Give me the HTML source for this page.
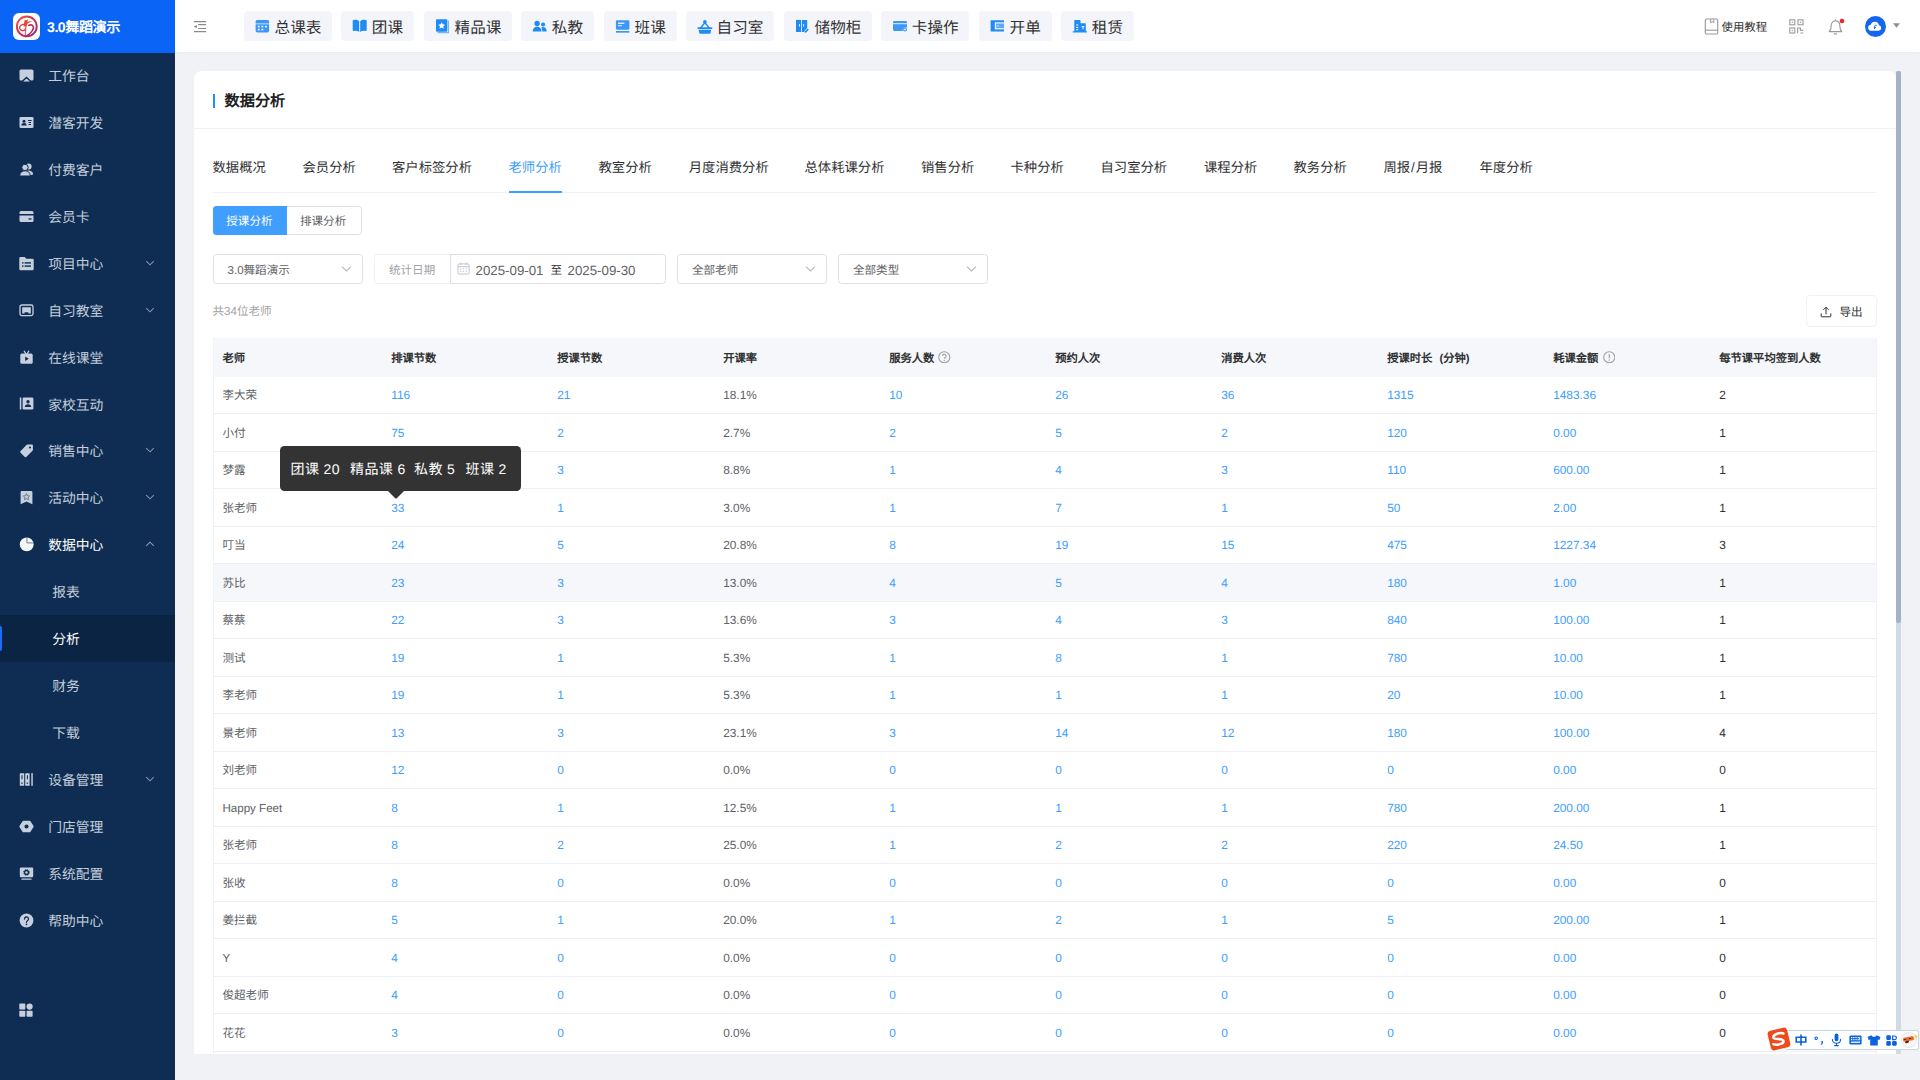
<!DOCTYPE html>
<html lang="zh-CN"><head><meta charset="utf-8"><title>数据分析</title><style>
*{box-sizing:border-box;margin:0;padding:0}
html,body{width:1920px;height:1080px;overflow:hidden;background:#f0f2f6;font-family:"Liberation Sans",sans-serif;text-rendering:geometricPrecision;}
.abs{position:absolute}
.t{position:absolute;white-space:nowrap;line-height:1}
#side{position:absolute;left:0;top:0;width:175px;height:1080px;background:#0f2d52}
#logo{position:absolute;left:0;top:0;width:175px;height:52.5px;background:#0a64f5}
#top{position:absolute;left:175px;top:0;width:1745px;height:52px;background:#fff;box-shadow:0 1px 3px rgba(0,21,41,.04)}
.mi{position:absolute;left:0;width:175px;height:46.92px}
.mi .tx{position:absolute;left:48.2px;top:2.1px;height:46.92px;line-height:46.92px;font-size:13.8px;color:#c3cddb;white-space:nowrap}
.mi.sub .tx{left:52.2px}
.mi svg.ic{position:absolute;left:18.5px;top:16px;width:15px;height:15px}
.mi svg.ch{position:absolute;left:145px;top:19px;width:10px;height:8px}
.nb{position:absolute;top:11px;height:30px;background:#f3f5fb;border-radius:4px}
.nb svg{position:absolute;left:11px;top:7px;width:16px;height:16px}
.nb span{position:absolute;left:30.6px;top:0;line-height:35.4px;font-size:15.6px;color:#333;white-space:nowrap}
#card{position:absolute;left:193.5px;top:71px;width:1702.5px;height:982.5px;background:#fff;border-radius:8px 8px 0 0;overflow:hidden}
.tab{position:absolute;top:159px;font-size:13.33px;color:#303133;white-space:nowrap;line-height:17px}
.hc{position:absolute;top:338px;height:38.75px;line-height:42.6px;font-size:11.3px;font-weight:bold;color:#303133;white-space:nowrap}
.c{position:absolute;font-size:11.85px;white-space:nowrap;line-height:39px;height:37.5px;color:#409eff}
.c.n{color:#606266}
.c.z{font-size:11.55px;line-height:40px}
.c.k{color:#303133}
.rl{position:absolute;left:213px;width:1663px;height:1px;background:#eceff5}
</style></head><body>
<div id="side"><div id="logo"><div class="abs" style="left:13.300px;top:13.300px;width:26.600px;height:26.600px;background:#fff;border-radius:6px"></div><svg class="abs" style="left:13.300px;top:13.300px;width:26.600px;height:26.600px" viewBox="0 0 26.6 26.6"><defs><linearGradient id="lg" gradientUnits="userSpaceOnUse" x1="4" y1="4" x2="22" y2="23"><stop offset="0" stop-color="#ec5a2e"/><stop offset=".45" stop-color="#d42f4b"/><stop offset="1" stop-color="#97286f"/></linearGradient></defs><circle cx="13.800" cy="13.400" r="9.900" fill="none" stroke="url(#lg)" stroke-width="1.900"/><path d="M15.800 12.300C18.800 11 21.200 12.700 20.200 15.700 19.200 18.900 16 21.700 12.500 23.600" fill="none" stroke="url(#lg)" stroke-width="1.700" stroke-linecap="round"/><path d="M13 12.600C12.600 16 12.400 19.500 12.400 22.900" fill="none" stroke="#d6587c" stroke-width="1.200"/><path d="M13 12C11.500 11.200 9.500 11.300 8 12.300 5.900 13.800 6.300 16.500 8.600 17.400 9.900 17.900 11.300 17.400 12.100 16.300" fill="none" stroke="#d93848" stroke-width="1.300" stroke-linecap="round"/><path d="M11.800 6.700L13.200 7.300 15.400 6.200 14 8.700 19.300 7.900 14.600 10.400 13.400 13.300 10.600 13.400 11 10.200z" fill="#e8452f"/><path d="M17.500 20.800C19.500 19.500 21 17.900 22 16" fill="none" stroke="#fff" stroke-width=".5" stroke-opacity=".7"/></svg><div class="t" style="left:47px;top:19.500px;font-size:14.100px;font-weight:bold;color:#fff;letter-spacing:-.45px">3.0舞蹈演示</div></div><div class="mi" style="top:52.000px;"><svg class="ic" viewBox="0 0 15 15"><path fill="#c6cfdd" d="M2 1.5h11a1.5 1.5 0 0 1 1.5 1.5v8a1.5 1.5 0 0 1-1.5 1.5h-1.2L7.5 8.6 3.2 12.5H2A1.5 1.5 0 0 1 .5 11V3A1.5 1.5 0 0 1 2 1.5z"/><path fill="#c6cfdd" d="M7.5 10.6l3.4 3H4.1z"/></svg><span class="tx" style="color:#c3cddb">工作台</span></div><div class="mi" style="top:98.920px;"><svg class="ic" viewBox="0 0 15 15"><rect fill="#c6cfdd" x=".5" y="2" width="14" height="11" rx="1.3"/><circle fill="#0f2d52" cx="5" cy="6.3" r="1.5"/><path fill="#0f2d52" d="M2.3 10.6c0-1.8 1.2-2.6 2.7-2.6s2.7.8 2.7 2.6z"/><rect fill="#0f2d52" x="9" y="5" width="3.6" height="1"/><rect fill="#0f2d52" x="9.6" y="7" width="2.4" height="1"/><rect fill="#0f2d52" x="9.6" y="9" width="2.4" height="1"/></svg><span class="tx" style="color:#c3cddb">潜客开发</span></div><div class="mi" style="top:145.840px;"><svg class="ic" viewBox="0 0 15 15"><circle fill="#c6cfdd" cx="9.6" cy="4.6" r="3"/><path fill="#c6cfdd" d="M5.5 13c0-3 1.8-4.6 4.1-4.6s4.4 1.4 4.4 3.4c0 .8-.5 1.2-1.2 1.2z"/><circle fill="#c6cfdd" cx="6" cy="5.4" r="3.2" stroke="#0f2d52" stroke-width="1"/><path fill="#c6cfdd" stroke="#0f2d52" stroke-width="1" d="M.8 13.6c0-3.2 2.2-4.8 5.2-4.8s5.2 1.6 5.2 4.8c0 .3-.2.4-.5.4H1.3c-.3 0-.5-.1-.5-.4z"/></svg><span class="tx" style="color:#c3cddb">付费客户</span></div><div class="mi" style="top:192.760px;"><svg class="ic" viewBox="0 0 15 15"><path fill="#c6cfdd" d="M2 2h11a1.5 1.5 0 0 1 1.5 1.5V5H.5V3.500A1.5 1.5 0 0 1 2 2zM.5 6.600h14V11.500A1.5 1.500 0 0 1 13 13H2A1.5 1.500 0 0 1 .5 11.500z"/><rect fill="#0f2d52" x="9.5" y="9.300" width="3" height="1.300"/></svg><span class="tx" style="color:#c3cddb">会员卡</span></div><div class="mi" style="top:239.680px;"><svg class="ic" viewBox="0 0 15 15"><path fill="#c6cfdd" d="M1.5 1h4.2l1.6 1.800H13.500A1.200 1.200 0 0 1 14.700 4V13a1.200 1.200 0 0 1-1.200 1.200H1.500A1.200 1.200 0 0 1 .3 13V2.200A1.200 1.200 0 0 1 1.500 1z"/><rect fill="#0f2d52" x="3" y="6.200" width="1.500" height="1.400"/><rect fill="#0f2d52" x="5.600" y="6.200" width="6.400" height="1.400"/><rect fill="#0f2d52" x="3" y="9.400" width="1.500" height="1.400"/><rect fill="#0f2d52" x="5.600" y="9.400" width="6.400" height="1.400"/></svg><span class="tx" style="color:#c3cddb">项目中心</span><svg class="ch" viewBox="0 0 10 8"><path d="M1.200 2.200L5 5.800 8.800 2.200" fill="none" stroke="#8493a8" stroke-width="1.100"/></svg></div><div class="mi" style="top:286.600px;"><svg class="ic" viewBox="0 0 15 15"><rect x="1" y="2" width="13" height="10.600" rx="1.800" fill="none" stroke="#c6cfdd" stroke-width="1.300"/><path fill="#c6cfdd" d="M3.200 4.300h8.600v6.200H9.400V9.300H5.600v1.200H3.200z"/></svg><span class="tx" style="color:#c3cddb">自习教室</span><svg class="ch" viewBox="0 0 10 8"><path d="M1.200 2.200L5 5.800 8.800 2.200" fill="none" stroke="#8493a8" stroke-width="1.100"/></svg></div><div class="mi" style="top:333.520px;"><svg class="ic" viewBox="0 0 15 15"><path d="M5.200 1.200L6.800 3.600M9.800 1.200L8.200 3.600" stroke="#c6cfdd" stroke-width="1.200" stroke-linecap="round"/><rect fill="#c6cfdd" x="1.300" y="3.600" width="12.400" height="10.200" rx="1.600"/><path fill="#0f2d52" d="M6.200 6.400l3.600 2.300-3.600 2.300z"/></svg><span class="tx" style="color:#c3cddb">在线课堂</span></div><div class="mi" style="top:380.440px;"><svg class="ic" viewBox="0 0 15 15"><rect fill="#c6cfdd" x=".8" y="1.500" width="1.500" height="12"/><rect fill="#c6cfdd" x="3.600" y="1.500" width="10.800" height="12" rx="1.300"/><circle fill="#0f2d52" cx="9" cy="5.800" r="1.700"/><path fill="#0f2d52" d="M5.800 11c0-2 1.400-2.800 3.200-2.800s3.200.8 3.200 2.800z"/></svg><span class="tx" style="color:#c3cddb">家校互动</span></div><div class="mi" style="top:427.360px;"><svg class="ic" viewBox="0 0 15 15"><path fill="#c6cfdd" d="M8.600 1.500H13a.9.9 0 0 1 .9.900v4.400a1.200 1.200 0 0 1-.35.850L7.200 14a1 1 0 0 1-1.400 0L1.400 9.600a1 1 0 0 1 0-1.400L7.750 1.850A1.200 1.200 0 0 1 8.600 1.500z"/><circle fill="#0f2d52" cx="10.900" cy="4.500" r="1.100"/></svg><span class="tx" style="color:#c3cddb">销售中心</span><svg class="ch" viewBox="0 0 10 8"><path d="M1.200 2.200L5 5.800 8.800 2.200" fill="none" stroke="#8493a8" stroke-width="1.100"/></svg></div><div class="mi" style="top:474.280px;"><svg class="ic" viewBox="0 0 15 15"><path fill="#c6cfdd" d="M2.800 1h9.400a1.200 1.200 0 0 1 1.200 1.200V14.200L7.500 11.600 1.600 14.200V2.200A1.200 1.200 0 0 1 2.800 1z"/><path d="M7.500 3.700l1 2 2.100.3-1.550 1.500.4 2.200-1.950-1.050-1.950 1.050.4-2.200L4.400 6l2.100-.3z" fill="none" stroke="#4f6280" stroke-width=".8"/></svg><span class="tx" style="color:#c3cddb">活动中心</span><svg class="ch" viewBox="0 0 10 8"><path d="M1.200 2.200L5 5.800 8.800 2.200" fill="none" stroke="#8493a8" stroke-width="1.100"/></svg></div><div class="mi" style="top:521.200px;"><svg class="ic" viewBox="0 0 15 15"><circle fill="#f4f6fa" cx="7.700" cy="7.400" r="6.950"/><path d="M7.900 .2V5.900H14.800" fill="none" stroke="#4f6280" stroke-width=".8"/></svg><span class="tx" style="color:#ffffff">数据中心</span><svg class="ch" viewBox="0 0 10 8"><path d="M1.200 5.800L5 2.200 8.800 5.800" fill="none" stroke="#8f9cb1" stroke-width="1.100"/></svg></div><div class="mi sub" style="top:568.120px;"><span class="tx" style="color:#c3cddb">报表</span></div><div class="mi sub" style="top:615.040px;background:#0c2443;"><div class="abs" style="left:0;top:10.500px;width:2.200px;height:25.500px;background:#1a6dff;border-radius:0 2px 2px 0"></div><span class="tx" style="color:#ffffff">分析</span></div><div class="mi sub" style="top:661.960px;"><span class="tx" style="color:#c3cddb">财务</span></div><div class="mi sub" style="top:708.880px;"><span class="tx" style="color:#c3cddb">下载</span></div><div class="mi" style="top:755.800px;"><svg class="ic" viewBox="0 0 15 15"><rect fill="#c6cfdd" x=".8" y="1.200" width="4.400" height="12.600" rx=".6"/><rect fill="#c6cfdd" x="6.200" y="1.200" width="4.400" height="12.600" rx=".6"/><rect fill="#c6cfdd" x="12.300" y="1.200" width="1.500" height="12.600"/><rect fill="#0f2d52" x="2.500" y="3.200" width="1" height="4"/><rect fill="#0f2d52" x="7.900" y="3.200" width="1" height="4"/><rect fill="#0f2d52" x="2.300" y="10.600" width="1.400" height="1.200"/><rect fill="#0f2d52" x="7.700" y="10.600" width="1.400" height="1.200"/></svg><span class="tx" style="color:#c3cddb">设备管理</span><svg class="ch" viewBox="0 0 10 8"><path d="M1.200 2.200L5 5.800 8.800 2.200" fill="none" stroke="#8493a8" stroke-width="1.100"/></svg></div><div class="mi" style="top:802.720px;"><svg class="ic" viewBox="0 0 15 15"><path fill="#c6cfdd" d="M4.600 1.700h5.800a1.300 1.300 0 0 1 1.100.65l2.900 4.500a1.300 1.300 0 0 1 0 1.300l-2.900 4.500a1.300 1.300 0 0 1-1.100.65H4.600a1.300 1.300 0 0 1-1.100-.65L.6 8.150a1.300 1.300 0 0 1 0-1.300l2.900-4.500a1.300 1.300 0 0 1 1.100-.65z"/><circle fill="#0f2d52" cx="7.500" cy="7.500" r="2"/></svg><span class="tx" style="color:#c3cddb">门店管理</span></div><div class="mi" style="top:849.640px;"><svg class="ic" viewBox="0 0 15 15"><rect fill="#c6cfdd" x=".8" y="1.600" width="13.400" height="9.600" rx="1.200"/><rect fill="#c6cfdd" x="2.400" y="12.400" width="10.200" height="1.400" rx=".5"/><circle cx="7.500" cy="6.400" r="1.900" fill="none" stroke="#0f2d52" stroke-width="1.300"/><circle cx="7.500" cy="6.400" r="2.900" fill="none" stroke="#0f2d52" stroke-width="1" stroke-dasharray="1.100 1.180"/></svg><span class="tx" style="color:#c3cddb">系统配置</span></div><div class="mi" style="top:896.560px;"><svg class="ic" viewBox="0 0 15 15"><circle fill="#c6cfdd" cx="7.500" cy="7.500" r="6.900"/><path d="M5.500 6a2 2 0 1 1 3 1.700c-.7.450-1 .800-1 1.600" fill="none" stroke="#0f2d52" stroke-width="1.300" stroke-linecap="round"/><circle fill="#0f2d52" cx="7.500" cy="11.300" r=".85"/></svg><span class="tx" style="color:#c3cddb">帮助中心</span></div><svg class="abs" style="left:19px;top:1002.500px;width:14px;height:14px" viewBox="0 0 14 14"><rect fill="#c6cfdd" x=".3" y=".6" width="6" height="6" rx=".8"/><circle fill="#c6cfdd" cx="10.600" cy="3.600" r="3.100"/><rect fill="#c6cfdd" x=".3" y="7.700" width="6" height="6" rx=".8"/><rect fill="#c6cfdd" x="7.600" y="7.700" width="6" height="6" rx=".8"/></svg></div>
<div id="top"></div><svg class="abs" style="left:193px;top:21px;width:14px;height:12px" viewBox="0 0 14 12"><path d="M.9 .65h12.200M5.100 3.700h8M5.100 7.500h8M.9 10.550h12.200" stroke="#8a8a8a" stroke-width="1.200" fill="none"/><path d="M3.800 3.900v3.300L.8 5.550z" fill="#8a8a8a"/></svg><div class="nb" style="left:244.0px;width:88.0px"><svg viewBox="0 0 16 16"><path fill="#3d97f8" d="M2.200 1.900h10.300a1.600 1.600 0 0 1 1.600 1.600v1.900H.6V3.500a1.600 1.600 0 0 1 1.600-1.600z"/><path fill="#3d97f8" d="M.6 6.300h13.500v6.500a1.600 1.600 0 0 1-1.600 1.600H2.200A1.600 1.600 0 0 1 .6 12.800z"/><g fill="#f3f5fb"><rect x="2.800" y="7.800" width="1.900" height="1.600"/><rect x="6.400" y="7.800" width="1.900" height="1.600"/><rect x="10" y="7.800" width="1.900" height="1.600"/><rect x="2.800" y="10.800" width="1.900" height="1.600"/><rect x="6.400" y="10.800" width="1.900" height="1.600"/></g></svg><span>总课表</span></div><div class="nb" style="left:341.2px;width:73.3px"><svg viewBox="0 0 16 16"><path fill="#1f8bf3" d="M.7 3.100C.7 2.400 1 2.100 1.600 2 3.800 1.600 5.800 2.100 7.200 3.300V14C5.800 12.900 3.900 12.500 1.800 12.900 1.100 13 .7 12.700.7 12z"/><path fill="#1f8bf3" d="M14.700 3.100c0-.7-.3-1-.9-1.100C11.600 1.600 9.600 2.100 8.200 3.300V14c1.400-1.100 3.300-1.500 5.400-1.100.7.100 1.100-.2 1.100-.9z"/></svg><span>团课</span></div><div class="nb" style="left:424.0px;width:88.0px"><svg viewBox="0 0 16 16"><path d="M13.400 2.600V14.600H2.600" fill="none" stroke="#1f8bf3" stroke-opacity=".6" stroke-width="1.200"/><rect fill="#1f8bf3" x="1" y="1.250" width="11.300" height="12.400" rx="1"/><path fill="#fff" d="M6.650 4.200l1.060 2.150 2.370.34-1.720 1.670.41 2.360-2.120-1.110-2.120 1.110.41-2.360L3.220 6.690l2.370-.34z"/></svg><span>精品课</span></div><div class="nb" style="left:521.2px;width:73.3px"><svg viewBox="0 0 16 16"><circle fill="#1f8bf3" cx="5.100" cy="5.500" r="2.650"/><path fill="#1f8bf3" d="M.7 13.500c0-3.100 1.800-4.700 4.400-4.700s4.400 1.600 4.400 4.700z"/><circle fill="#1f8bf3" cx="11.100" cy="6.500" r="2.050"/><path fill="#1f8bf3" d="M10.300 13.500c0-1.700-.4-3-1.200-3.900.6-.4 1.200-.6 2-.6 2.100 0 3.600 1.500 3.600 4.500z"/></svg><span>私教</span></div><div class="nb" style="left:604.0px;width:73.3px"><svg viewBox="0 0 16 16"><rect fill="#3d97f8" x=".9" y="2.250" width="13.500" height="9.400" rx="1.300"/><rect fill="#e8f1fd" x="3" y="4.600" width="6.400" height="1.300"/><rect fill="#e8f1fd" fill-opacity=".8" x="3" y="7" width="4" height="1.300"/><rect fill="#3d97f8" x=".9" y="13" width="13.500" height="1.700"/></svg><span>班课</span></div><div class="nb" style="left:686.0px;width:88.0px"><svg viewBox="0 0 16 16"><circle fill="#1f8bf3" cx="7.900" cy="3.800" r="1.900"/><path d="M7.900 4.800l4.600 5.400M7.900 4.800L3.300 10.200" fill="none" stroke="#1f8bf3" stroke-width="1.400"/><rect fill="#1f8bf3" x=".5" y="9.300" width="14.800" height="1.700" rx=".5"/><path fill="#1f8bf3" d="M1.700 11.700h12.400l-.5 3.100a1 1 0 0 1-1 .85H3.200a1 1 0 0 1-1-.85z"/></svg><span>自习室</span></div><div class="nb" style="left:784.0px;width:88.0px"><svg viewBox="0 0 16 16"><rect fill="#1f8bf3" x="1" y="1.900" width="5.200" height="12.100"/><path fill="#1f8bf3" d="M7 1.900h5.200v8.200l-2.600 2.700-.4 1.200H7z"/><rect fill="#f3f5fb" x="4.100" y="6" width=".9" height="2.600"/><rect fill="#f3f5fb" x="8.200" y="6" width=".9" height="2.600"/><path fill="#1f8bf3" d="M12.700 10.600l1.100 1.100-2.600 2.700-1.500.4.400-1.500z"/></svg><span>储物柜</span></div><div class="nb" style="left:881.2px;width:88.0px"><svg viewBox="0 0 16 16"><path fill="#3d97f8" d="M2.400 2.900h11.200A1.400 1.400 0 0 1 15 4.300v5.300a2.900 2.900 0 0 0-4.200 3.400H2.400A1.400 1.400 0 0 1 1 11.600V4.300a1.400 1.400 0 0 1 1.400-1.400z"/><rect fill="#e8f1fd" x="1" y="5.200" width="14" height="1"/><circle cx="13" cy="11.400" r="1.500" fill="none" stroke="#3d97f8" stroke-width="1.100"/></svg><span>卡操作</span></div><div class="nb" style="left:979.0px;width:73.3px"><svg viewBox="0 0 16 16"><rect fill="#1f8bf3" x=".6" y="2.250" width="13.400" height="11.250"/><rect fill="#f3f5fb" x="4.800" y="4.300" width="9.200" height="7.100"/><rect fill="#5ea9f8" x="6.100" y="5.500" width="7.900" height="4.700"/><rect fill="#f3f5fb" x="7.300" y="7.300" width="1.300" height="1.100"/></svg><span>开单</span></div><div class="nb" style="left:1061.2px;width:73.3px"><svg viewBox="0 0 16 16"><path fill="#1f8bf3" d="M2.300 2.500a.6.600 0 0 1 .6-.6h5a.6.600 0 0 1 .6.600v2.800h4.700a.6.600 0 0 1 .6.600v7.400h1.200v1.300H.75v-1.300h1.550z"/><rect fill="#f3f5fb" x="4.200" y="6.400" width="2" height="1.100"/><rect fill="#f3f5fb" x="4.200" y="8.800" width="2" height="1.100"/><rect fill="#f3f5fb" x="4.200" y="11.200" width="2" height="1.100"/><path fill="#f3f5fb" d="M9.700 8h2.600v.9l-.8.400v2h-1v-2l-.8-.4z"/></svg><span>租赁</span></div><svg class="abs" style="left:1704px;top:17.500px;width:15px;height:17px" viewBox="0 0 15 17"><path d="M2.600 1h9.800a1.300 1.300 0 0 1 1.300 1.300V14.700A1.300 1.300 0 0 1 12.400 16H2.600A1.300 1.300 0 0 1 1.300 14.700V2.300A1.300 1.300 0 0 1 2.600 1z" fill="none" stroke="#9a9a9a" stroke-width="1.150"/><path d="M1.300 12.200h12.400" stroke="#9a9a9a" stroke-width="1.150"/><path d="M6.600 1.200v3.600l1.600-1.100 1.600 1.100V1.200" fill="none" stroke="#9a9a9a" stroke-width="1"/></svg><div class="t" style="left:1721.500px;top:20.500px;font-size:11.400px;color:#333;top:23.200px">使用教程</div><svg class="abs" style="left:1789px;top:19px;width:15px;height:15px" viewBox="0 0 15 15"><g fill="none" stroke="#9a9a9a" stroke-width="1.100"><rect x=".8" y=".8" width="5" height="5"/><rect x="9" y=".8" width="5" height="5"/><rect x=".8" y="9" width="5" height="5"/><path d="M8.600 14.200V9h2.800v2.400h2.800M11.400 14h2.800"/></g><g fill="#9a9a9a"><rect x="2.700" y="2.700" width="1.200" height="1.200"/><rect x="10.900" y="2.700" width="1.200" height="1.200"/><rect x="2.700" y="10.900" width="1.200" height="1.200"/></g></svg><svg class="abs" style="left:1827px;top:18px;width:18px;height:18px" viewBox="0 0 18 18"><path d="M2.200 13.600c1.500-1.200 1.900-2.600 1.900-5.400 0-3.200 1.800-5.400 4.400-5.400s4.400 2.200 4.400 5.400c0 2.800.4 4.200 1.900 5.400z" fill="none" stroke="#9a9a9a" stroke-width="1.150" stroke-linejoin="round"/><path d="M7.400 15.800h2.200" stroke="#9a9a9a" stroke-width="1.200" stroke-linecap="round"/><path d="M8.500 1.400v1.200" stroke="#9a9a9a" stroke-width="1.150"/><circle cx="15" cy="3" r="2.300" fill="#f5222d"/></svg><div class="abs" style="left:1864.500px;top:15.500px;width:21.500px;height:21.500px;border-radius:50%;background:#1465f0"></div><svg class="abs" style="left:1867px;top:20px;width:16px;height:12px" viewBox="0 0 16 12"><path fill="#fff" d="M4.200 10.800a3.100 3.100 0 0 1-.5-6.150A4.300 4.300 0 0 1 12 5.200a2.850 2.850 0 0 1-.3 5.600z"/><path d="M7.400 9.200V6.800c0-1 .6-1.500 1.500-1.500h.9M7.400 7.600h1.600" fill="none" stroke="#1465f0" stroke-width="1"/></svg><svg class="abs" style="left:1892.500px;top:22.500px;width:7px;height:5px" viewBox="0 0 7 5"><path d="M0 .2h7L3.500 4.800z" fill="#8e8e8e"/></svg>
<div id="card"></div><div class="abs" style="left:1896px;top:71px;width:5px;height:982.500px;background:#d2dae6"></div><div class="abs" style="left:1896px;top:71px;width:5px;height:552px;background:#a4b1c6;border-radius:2.500px"></div><div class="abs" style="left:213px;top:93.500px;width:2.300px;height:14.300px;background:#1890ff"></div><div class="t" style="left:224.500px;top:94px;font-size:15.200px;font-weight:bold;color:#1f1f1f">数据分析</div><div class="abs" style="left:193.500px;top:128px;width:1702.500px;height:1px;background:#f0f1f3"></div><div class="tab" style="left:212.5px;color:#303133">数据概况</div><div class="tab" style="left:302.5px;color:#303133">会员分析</div><div class="tab" style="left:392.0px;color:#303133">客户标签分析</div><div class="tab" style="left:508.5px;color:#409eff">老师分析</div><div class="tab" style="left:598.5px;color:#303133">教室分析</div><div class="tab" style="left:688.8px;color:#303133">月度消费分析</div><div class="tab" style="left:804.5px;color:#303133">总体耗课分析</div><div class="tab" style="left:921.0px;color:#303133">销售分析</div><div class="tab" style="left:1010.5px;color:#303133">卡种分析</div><div class="tab" style="left:1100.5px;color:#303133">自习室分析</div><div class="tab" style="left:1204.0px;color:#303133">课程分析</div><div class="tab" style="left:1293.5px;color:#303133">教务分析</div><div class="tab" style="left:1383.5px;color:#303133">周报<span style="padding:0 .9px">/</span>月报</div><div class="tab" style="left:1479.5px;color:#303133">年度分析</div><div class="abs" style="left:213px;top:191.500px;width:1663px;height:1.600px;background:#f0f2f5"></div><div class="abs" style="left:509px;top:191px;width:53px;height:2.200px;background:#409eff"></div><div class="abs" style="left:213px;top:206px;width:148.700px;height:29.200px;border:1px solid #dcdfe6;border-radius:3.500px;background:#fff"></div><div class="abs" style="left:213px;top:206px;width:74px;height:29.200px;border-radius:3.500px 0 0 3.500px;background:#409eff"></div><div class="t" style="left:226.300px;top:216.500px;font-size:11.550px;color:#fff">授课分析</div><div class="t" style="left:300px;top:216.500px;font-size:11.550px;color:#606266">排课分析</div><div class="abs" style="left:213.0px;top:254px;width:150.0px;height:30px;border:1px solid #dcdfe6;border-radius:3.500px;background:#fff"></div><svg class="abs" style="left:341.0px;top:264.500px;width:11px;height:8px" viewBox="0 0 11 8"><path d="M1 1.600l4.500 4.400L10 1.600" fill="none" stroke="#b4b8c0" stroke-width="1.100"/></svg><div class="t" style="left:227.500px;top:265.800px;font-size:11.550px;color:#606266">3.0舞蹈演示</div><div class="abs" style="left:374.0px;top:254px;width:77.0px;height:30px;border:1px solid #eceff5;border-radius:3.500px 0 0 3.500px;background:#fff"></div><div class="t" style="left:389px;top:265.800px;font-size:11.550px;color:#a0a3a9">统计日期</div><div class="abs" style="left:450.0px;top:254px;width:216.0px;height:30px;border:1px solid #dcdfe6;border-radius:0 3.500px 3.500px 0;background:#fff"></div><svg class="abs" style="left:456.500px;top:262px;width:13px;height:13px" viewBox="0 0 13 13"><rect x=".9" y="1.900" width="11.200" height="10.200" rx="1.200" fill="none" stroke="#c0c4cc" stroke-width="1"/><path d="M.9 4.700h11.200M3.800.6v2.400M9.200.6v2.400" stroke="#c0c4cc" stroke-width="1"/><path d="M3 6.900h7M3 9.300h7" stroke="#c0c4cc" stroke-width="1" stroke-dasharray="1.300 1.500"/></svg><div class="t" style="left:475.500px;top:263.600px;font-size:13.300px;color:#606266">2025-09-01</div><div class="t" style="left:550.500px;top:266.200px;font-size:11.550px;color:#303133">至</div><div class="t" style="left:567.500px;top:263.600px;font-size:13.300px;color:#606266">2025-09-30</div><div class="abs" style="left:676.9px;top:254px;width:150.0px;height:30px;border:1px solid #dcdfe6;border-radius:3.500px;background:#fff"></div><svg class="abs" style="left:805.0px;top:264.500px;width:11px;height:8px" viewBox="0 0 11 8"><path d="M1 1.600l4.500 4.400L10 1.600" fill="none" stroke="#b4b8c0" stroke-width="1.100"/></svg><div class="t" style="left:692px;top:265.800px;font-size:11.550px;color:#606266">全部老师</div><div class="abs" style="left:838.1px;top:254px;width:150.0px;height:30px;border:1px solid #dcdfe6;border-radius:3.500px;background:#fff"></div><svg class="abs" style="left:966.3px;top:264.500px;width:11px;height:8px" viewBox="0 0 11 8"><path d="M1 1.600l4.500 4.400L10 1.600" fill="none" stroke="#b4b8c0" stroke-width="1.100"/></svg><div class="t" style="left:853px;top:265.800px;font-size:11.550px;color:#606266">全部类型</div><div class="t" style="left:212.500px;top:306.900px;font-size:11.550px;color:#a3a3a3">共34位老师</div><div class="abs" style="left:1806px;top:295.300px;width:70.500px;height:31.300px;border:1px solid #f0f2f6;border-radius:4px;background:#fff"></div><svg class="abs" style="left:1820px;top:306px;width:12px;height:12px" viewBox="0 0 12 12"><path d="M1.200 7.400v2.800a.6.600 0 0 0 .6.600h8.400a.6.600 0 0 0 .6-.6V7.400M6 8.200V1.400M3.400 3.800L6 1.200l2.600 2.600" fill="none" stroke="#303133" stroke-width="1"/></svg><div class="t" style="left:1839.500px;top:307.900px;font-size:11.550px;color:#303133">导出</div><div class="abs" style="left:213px;top:338px;width:1663px;height:38.750px;background:#f5f7fa"></div><div class="abs" style="left:213px;top:338px;width:1px;height:715.500px;background:#f0f2f6"></div><div class="abs" style="left:1876px;top:338px;width:1px;height:715.500px;background:#f0f2f6"></div><div class="hc" style="left:222.5px">老师</div><div class="hc" style="left:391.2px">排课节数</div><div class="hc" style="left:557.2px">授课节数</div><div class="hc" style="left:723.2px">开课率</div><div class="hc" style="left:889.2px">服务人数</div><div class="hc" style="left:1055.2px">预约人次</div><div class="hc" style="left:1221.2px">消费人次</div><div class="hc" style="left:1387.2px">授课时长<span style="display:inline-block;width:7px"></span>(分钟)</div><div class="hc" style="left:1553.2px">耗课金额</div><div class="hc" style="left:1719.2px">每节课平均签到人数</div><svg class="abs" style="left:938.300px;top:350.900px;width:12.600px;height:12.600px" viewBox="0 0 12 12"><circle cx="6" cy="6" r="5.300" fill="none" stroke="#9a9da2" stroke-width="1"/><path d="M4.300 4.800a1.700 1.700 0 1 1 2.600 1.400c-.6.400-.9.700-.9 1.300" fill="none" stroke="#9a9da2" stroke-width="1"/><circle cx="6" cy="9" r=".65" fill="#9a9da2"/></svg><svg class="abs" style="left:1602.500px;top:350.900px;width:12.600px;height:12.600px" viewBox="0 0 12 12"><circle cx="6" cy="6" r="5.300" fill="none" stroke="#9a9da2" stroke-width="1"/><path d="M6 3v3.800" stroke="#9a9da2" stroke-width="1.100"/><circle cx="6" cy="8.600" r=".65" fill="#9a9da2"/></svg><div class="rl" style="top:413.00px"></div><div class="c n z" style="left:222.5px;top:376.00px">李大荣</div><div class="c" style="left:391.2px;top:376.00px">116</div><div class="c" style="left:557.2px;top:376.00px">21</div><div class="c n" style="left:723.2px;top:376.00px">18.1%</div><div class="c" style="left:889.2px;top:376.00px">10</div><div class="c" style="left:1055.2px;top:376.00px">26</div><div class="c" style="left:1221.2px;top:376.00px">36</div><div class="c" style="left:1387.2px;top:376.00px">1315</div><div class="c" style="left:1553.2px;top:376.00px">1483.36</div><div class="c k" style="left:1719.2px;top:376.00px">2</div><div class="rl" style="top:450.50px"></div><div class="c n z" style="left:222.5px;top:413.50px">小付</div><div class="c" style="left:391.2px;top:413.50px">75</div><div class="c" style="left:557.2px;top:413.50px">2</div><div class="c n" style="left:723.2px;top:413.50px">2.7%</div><div class="c" style="left:889.2px;top:413.50px">2</div><div class="c" style="left:1055.2px;top:413.50px">5</div><div class="c" style="left:1221.2px;top:413.50px">2</div><div class="c" style="left:1387.2px;top:413.50px">120</div><div class="c" style="left:1553.2px;top:413.50px">0.00</div><div class="c k" style="left:1719.2px;top:413.50px">1</div><div class="rl" style="top:488.00px"></div><div class="c n z" style="left:222.5px;top:451.00px">梦露</div><div class="c" style="left:391.2px;top:451.00px">34</div><div class="c" style="left:557.2px;top:451.00px">3</div><div class="c n" style="left:723.2px;top:451.00px">8.8%</div><div class="c" style="left:889.2px;top:451.00px">1</div><div class="c" style="left:1055.2px;top:451.00px">4</div><div class="c" style="left:1221.2px;top:451.00px">3</div><div class="c" style="left:1387.2px;top:451.00px">110</div><div class="c" style="left:1553.2px;top:451.00px">600.00</div><div class="c k" style="left:1719.2px;top:451.00px">1</div><div class="rl" style="top:525.50px"></div><div class="c n z" style="left:222.5px;top:488.50px">张老师</div><div class="c" style="left:391.2px;top:488.50px">33</div><div class="c" style="left:557.2px;top:488.50px">1</div><div class="c n" style="left:723.2px;top:488.50px">3.0%</div><div class="c" style="left:889.2px;top:488.50px">1</div><div class="c" style="left:1055.2px;top:488.50px">7</div><div class="c" style="left:1221.2px;top:488.50px">1</div><div class="c" style="left:1387.2px;top:488.50px">50</div><div class="c" style="left:1553.2px;top:488.50px">2.00</div><div class="c k" style="left:1719.2px;top:488.50px">1</div><div class="rl" style="top:563.00px"></div><div class="c n z" style="left:222.5px;top:526.00px">叮当</div><div class="c" style="left:391.2px;top:526.00px">24</div><div class="c" style="left:557.2px;top:526.00px">5</div><div class="c n" style="left:723.2px;top:526.00px">20.8%</div><div class="c" style="left:889.2px;top:526.00px">8</div><div class="c" style="left:1055.2px;top:526.00px">19</div><div class="c" style="left:1221.2px;top:526.00px">15</div><div class="c" style="left:1387.2px;top:526.00px">475</div><div class="c" style="left:1553.2px;top:526.00px">1227.34</div><div class="c k" style="left:1719.2px;top:526.00px">3</div><div class="abs" style="left:214px;top:563.50px;width:1662px;height:37.500px;background:#f5f7fa"></div><div class="rl" style="top:600.50px"></div><div class="c n z" style="left:222.5px;top:563.50px">苏比</div><div class="c" style="left:391.2px;top:563.50px">23</div><div class="c" style="left:557.2px;top:563.50px">3</div><div class="c n" style="left:723.2px;top:563.50px">13.0%</div><div class="c" style="left:889.2px;top:563.50px">4</div><div class="c" style="left:1055.2px;top:563.50px">5</div><div class="c" style="left:1221.2px;top:563.50px">4</div><div class="c" style="left:1387.2px;top:563.50px">180</div><div class="c" style="left:1553.2px;top:563.50px">1.00</div><div class="c k" style="left:1719.2px;top:563.50px">1</div><div class="rl" style="top:638.00px"></div><div class="c n z" style="left:222.5px;top:601.00px">蔡蔡</div><div class="c" style="left:391.2px;top:601.00px">22</div><div class="c" style="left:557.2px;top:601.00px">3</div><div class="c n" style="left:723.2px;top:601.00px">13.6%</div><div class="c" style="left:889.2px;top:601.00px">3</div><div class="c" style="left:1055.2px;top:601.00px">4</div><div class="c" style="left:1221.2px;top:601.00px">3</div><div class="c" style="left:1387.2px;top:601.00px">840</div><div class="c" style="left:1553.2px;top:601.00px">100.00</div><div class="c k" style="left:1719.2px;top:601.00px">1</div><div class="rl" style="top:675.50px"></div><div class="c n z" style="left:222.5px;top:638.50px">测试</div><div class="c" style="left:391.2px;top:638.50px">19</div><div class="c" style="left:557.2px;top:638.50px">1</div><div class="c n" style="left:723.2px;top:638.50px">5.3%</div><div class="c" style="left:889.2px;top:638.50px">1</div><div class="c" style="left:1055.2px;top:638.50px">8</div><div class="c" style="left:1221.2px;top:638.50px">1</div><div class="c" style="left:1387.2px;top:638.50px">780</div><div class="c" style="left:1553.2px;top:638.50px">10.00</div><div class="c k" style="left:1719.2px;top:638.50px">1</div><div class="rl" style="top:713.00px"></div><div class="c n z" style="left:222.5px;top:676.00px">李老师</div><div class="c" style="left:391.2px;top:676.00px">19</div><div class="c" style="left:557.2px;top:676.00px">1</div><div class="c n" style="left:723.2px;top:676.00px">5.3%</div><div class="c" style="left:889.2px;top:676.00px">1</div><div class="c" style="left:1055.2px;top:676.00px">1</div><div class="c" style="left:1221.2px;top:676.00px">1</div><div class="c" style="left:1387.2px;top:676.00px">20</div><div class="c" style="left:1553.2px;top:676.00px">10.00</div><div class="c k" style="left:1719.2px;top:676.00px">1</div><div class="rl" style="top:750.50px"></div><div class="c n z" style="left:222.5px;top:713.50px">景老师</div><div class="c" style="left:391.2px;top:713.50px">13</div><div class="c" style="left:557.2px;top:713.50px">3</div><div class="c n" style="left:723.2px;top:713.50px">23.1%</div><div class="c" style="left:889.2px;top:713.50px">3</div><div class="c" style="left:1055.2px;top:713.50px">14</div><div class="c" style="left:1221.2px;top:713.50px">12</div><div class="c" style="left:1387.2px;top:713.50px">180</div><div class="c" style="left:1553.2px;top:713.50px">100.00</div><div class="c k" style="left:1719.2px;top:713.50px">4</div><div class="rl" style="top:788.00px"></div><div class="c n z" style="left:222.5px;top:751.00px">刘老师</div><div class="c" style="left:391.2px;top:751.00px">12</div><div class="c" style="left:557.2px;top:751.00px">0</div><div class="c n" style="left:723.2px;top:751.00px">0.0%</div><div class="c" style="left:889.2px;top:751.00px">0</div><div class="c" style="left:1055.2px;top:751.00px">0</div><div class="c" style="left:1221.2px;top:751.00px">0</div><div class="c" style="left:1387.2px;top:751.00px">0</div><div class="c" style="left:1553.2px;top:751.00px">0.00</div><div class="c k" style="left:1719.2px;top:751.00px">0</div><div class="rl" style="top:825.50px"></div><div class="c n z" style="left:222.5px;top:788.50px">Happy Feet</div><div class="c" style="left:391.2px;top:788.50px">8</div><div class="c" style="left:557.2px;top:788.50px">1</div><div class="c n" style="left:723.2px;top:788.50px">12.5%</div><div class="c" style="left:889.2px;top:788.50px">1</div><div class="c" style="left:1055.2px;top:788.50px">1</div><div class="c" style="left:1221.2px;top:788.50px">1</div><div class="c" style="left:1387.2px;top:788.50px">780</div><div class="c" style="left:1553.2px;top:788.50px">200.00</div><div class="c k" style="left:1719.2px;top:788.50px">1</div><div class="rl" style="top:863.00px"></div><div class="c n z" style="left:222.5px;top:826.00px">张老师</div><div class="c" style="left:391.2px;top:826.00px">8</div><div class="c" style="left:557.2px;top:826.00px">2</div><div class="c n" style="left:723.2px;top:826.00px">25.0%</div><div class="c" style="left:889.2px;top:826.00px">1</div><div class="c" style="left:1055.2px;top:826.00px">2</div><div class="c" style="left:1221.2px;top:826.00px">2</div><div class="c" style="left:1387.2px;top:826.00px">220</div><div class="c" style="left:1553.2px;top:826.00px">24.50</div><div class="c k" style="left:1719.2px;top:826.00px">1</div><div class="rl" style="top:900.50px"></div><div class="c n z" style="left:222.5px;top:863.50px">张收</div><div class="c" style="left:391.2px;top:863.50px">8</div><div class="c" style="left:557.2px;top:863.50px">0</div><div class="c n" style="left:723.2px;top:863.50px">0.0%</div><div class="c" style="left:889.2px;top:863.50px">0</div><div class="c" style="left:1055.2px;top:863.50px">0</div><div class="c" style="left:1221.2px;top:863.50px">0</div><div class="c" style="left:1387.2px;top:863.50px">0</div><div class="c" style="left:1553.2px;top:863.50px">0.00</div><div class="c k" style="left:1719.2px;top:863.50px">0</div><div class="rl" style="top:938.00px"></div><div class="c n z" style="left:222.5px;top:901.00px">姜拦截</div><div class="c" style="left:391.2px;top:901.00px">5</div><div class="c" style="left:557.2px;top:901.00px">1</div><div class="c n" style="left:723.2px;top:901.00px">20.0%</div><div class="c" style="left:889.2px;top:901.00px">1</div><div class="c" style="left:1055.2px;top:901.00px">2</div><div class="c" style="left:1221.2px;top:901.00px">1</div><div class="c" style="left:1387.2px;top:901.00px">5</div><div class="c" style="left:1553.2px;top:901.00px">200.00</div><div class="c k" style="left:1719.2px;top:901.00px">1</div><div class="rl" style="top:975.50px"></div><div class="c n z" style="left:222.5px;top:938.50px">Y</div><div class="c" style="left:391.2px;top:938.50px">4</div><div class="c" style="left:557.2px;top:938.50px">0</div><div class="c n" style="left:723.2px;top:938.50px">0.0%</div><div class="c" style="left:889.2px;top:938.50px">0</div><div class="c" style="left:1055.2px;top:938.50px">0</div><div class="c" style="left:1221.2px;top:938.50px">0</div><div class="c" style="left:1387.2px;top:938.50px">0</div><div class="c" style="left:1553.2px;top:938.50px">0.00</div><div class="c k" style="left:1719.2px;top:938.50px">0</div><div class="rl" style="top:1013.00px"></div><div class="c n z" style="left:222.5px;top:976.00px">俊超老师</div><div class="c" style="left:391.2px;top:976.00px">4</div><div class="c" style="left:557.2px;top:976.00px">0</div><div class="c n" style="left:723.2px;top:976.00px">0.0%</div><div class="c" style="left:889.2px;top:976.00px">0</div><div class="c" style="left:1055.2px;top:976.00px">0</div><div class="c" style="left:1221.2px;top:976.00px">0</div><div class="c" style="left:1387.2px;top:976.00px">0</div><div class="c" style="left:1553.2px;top:976.00px">0.00</div><div class="c k" style="left:1719.2px;top:976.00px">0</div><div class="rl" style="top:1050.50px"></div><div class="c n z" style="left:222.5px;top:1013.50px">花花</div><div class="c" style="left:391.2px;top:1013.50px">3</div><div class="c" style="left:557.2px;top:1013.50px">0</div><div class="c n" style="left:723.2px;top:1013.50px">0.0%</div><div class="c" style="left:889.2px;top:1013.50px">0</div><div class="c" style="left:1055.2px;top:1013.50px">0</div><div class="c" style="left:1221.2px;top:1013.50px">0</div><div class="c" style="left:1387.2px;top:1013.50px">0</div><div class="c" style="left:1553.2px;top:1013.50px">0.00</div><div class="c k" style="left:1719.2px;top:1013.50px">0</div><div class="abs" style="left:280px;top:446px;width:241px;height:45px;background:#333333;border-radius:4.500px"></div><svg class="abs" style="left:388px;top:490.500px;width:16px;height:8px" viewBox="0 0 16 8"><path d="M0 0h16L9 7a1.400 1.400 0 0 1-2 0z" fill="#333333"/></svg><div class="t" style="left:290.5px;top:461.500px;font-size:14px;color:#fff;letter-spacing:.4px">团课 20</div><div class="t" style="left:350.0px;top:461.500px;font-size:14px;color:#fff;letter-spacing:.4px">精品课 6</div><div class="t" style="left:414.0px;top:461.500px;font-size:14px;color:#fff;letter-spacing:.4px">私教 5</div><div class="t" style="left:465.5px;top:461.500px;font-size:14px;color:#fff;letter-spacing:.4px">班课 2</div>
<div class="abs" style="left:1784px;top:1030px;width:134.500px;height:19.500px;background:#fff;border:1px solid #c3d4ec;border-radius:2.500px"></div><div class="abs" style="left:1768.800px;top:1028.500px;width:20px;height:20px;background:#ef4a1c;border-radius:3.500px;transform:rotate(-14deg)"></div><svg class="abs" style="left:1768.300px;top:1029px;width:21px;height:20px" viewBox="0 0 21 20"><path d="M16.200 5.200C13 3.600 6.500 4.400 5.600 7.400c-.9 3.200 9.400 1.900 9.600 5.200.2 2.800-7 3.700-10.600 1.800" fill="none" stroke="#fff" stroke-width="2.500" stroke-linecap="round" transform="rotate(-8 10.5 10)"/></svg><svg class="abs" style="left:1795px;top:1034px;width:12px;height:12px" viewBox="0 0 12 12"><path d="M1.200 3.200h9.600v4.800H1.200zM6 .6v11" fill="none" stroke="#0a62dd" stroke-width="1.600"/></svg><svg class="abs" style="left:1814px;top:1036px;width:11px;height:10px" viewBox="0 0 11 10"><circle cx="2.200" cy="2.200" r="1.250" fill="none" stroke="#0a62dd" stroke-width="1.100"/><path d="M7.200 5.200h1.900c.2 1.900-.5 3.100-2.100 3.700l-.3-.7c.8-.4 1.100-.9 1.100-1.600h-.6z" fill="#0a62dd"/></svg><svg class="abs" style="left:1831px;top:1033px;width:11px;height:14px" viewBox="0 0 11 14"><rect x="3.600" y=".6" width="3.800" height="7.600" rx="1.900" fill="#0a62dd"/><path d="M1.400 6.200c0 2.600 1.700 4.100 4.100 4.100s4.100-1.500 4.100-4.100M5.500 10.400v1.600M3.600 12.600h3.800" fill="none" stroke="#0a62dd" stroke-width="1.100" stroke-linecap="round"/></svg><svg class="abs" style="left:1849px;top:1035px;width:13px;height:10px" viewBox="0 0 13 10"><rect x=".4" y=".4" width="12.200" height="9.200" rx="1.400" fill="#0a62dd"/><g fill="#fff"><rect x="2" y="2" width="1.300" height="1.200"/><rect x="4.200" y="2" width="1.300" height="1.200"/><rect x="6.400" y="2" width="1.300" height="1.200"/><rect x="8.600" y="2" width="1.300" height="1.200"/><rect x="2" y="4.100" width="1.300" height="1.200"/><rect x="4.200" y="4.100" width="1.300" height="1.200"/><rect x="6.400" y="4.100" width="1.300" height="1.200"/><rect x="8.600" y="4.100" width="1.300" height="1.200"/><rect x="10.200" y="2" width=".9" height="3.300"/><rect x="2" y="6.600" width="9" height="1.300"/></g></svg><svg class="abs" style="left:1866.500px;top:1035px;width:14px;height:11px" viewBox="0 0 14 11"><path d="M4.400.3c.6 1.100 1.500 1.500 2.600 1.500S9 1.400 9.600.3l3.800 1.600-1 3.100-1.600-.5v6.100H3.200V4.500l-1.600.5-1-3.100z" fill="#0a62dd"/></svg><svg class="abs" style="left:1885.500px;top:1035px;width:11px;height:11px" viewBox="0 0 11 11"><rect x=".3" y=".3" width="4.600" height="4.600" rx="1.200" fill="#0a62dd"/><rect x=".3" y="6.100" width="4.600" height="4.600" rx="1.200" fill="#0a62dd"/><rect x="6.100" y="6.100" width="4.600" height="4.600" rx="1.200" fill="#0a62dd"/><path d="M6.600 1h2a1.800 1.800 0 0 1 0 3.600h-2z" fill="none" stroke="#0a62dd" stroke-width="1.200"/></svg><div class="abs" style="left:1901px;top:1032px;width:15.500px;height:15.500px;border-radius:50%;background:#fbf7f7;border:1px solid #efe4e6"></div><div class="abs" style="left:1902.500px;top:1036.500px;width:10.500px;height:4.200px;background:#ee6a22;border-radius:1.500px;transform:rotate(-10deg)"></div><div class="abs" style="left:1904px;top:1038.500px;width:2.200px;height:1.800px;background:#3a2a24;border-radius:1px"></div><div class="abs" style="left:1908.500px;top:1037.600px;width:2.200px;height:1.800px;background:#3a2a24;border-radius:1px"></div><div class="abs" style="left:1904.500px;top:1041px;width:4px;height:1.800px;background:#2b2b2b;border-radius:1px;transform:rotate(-15deg)"></div><svg class="abs" style="left:1913.500px;top:1034px;width:4px;height:5px" viewBox="0 0 4 5"><path d="M2 0l.9 1.800L4 2.500l-1.100.7L2 5l-.9-1.800L0 2.500l1.100-.7z" fill="#f7d93a"/></svg>
</body></html>
